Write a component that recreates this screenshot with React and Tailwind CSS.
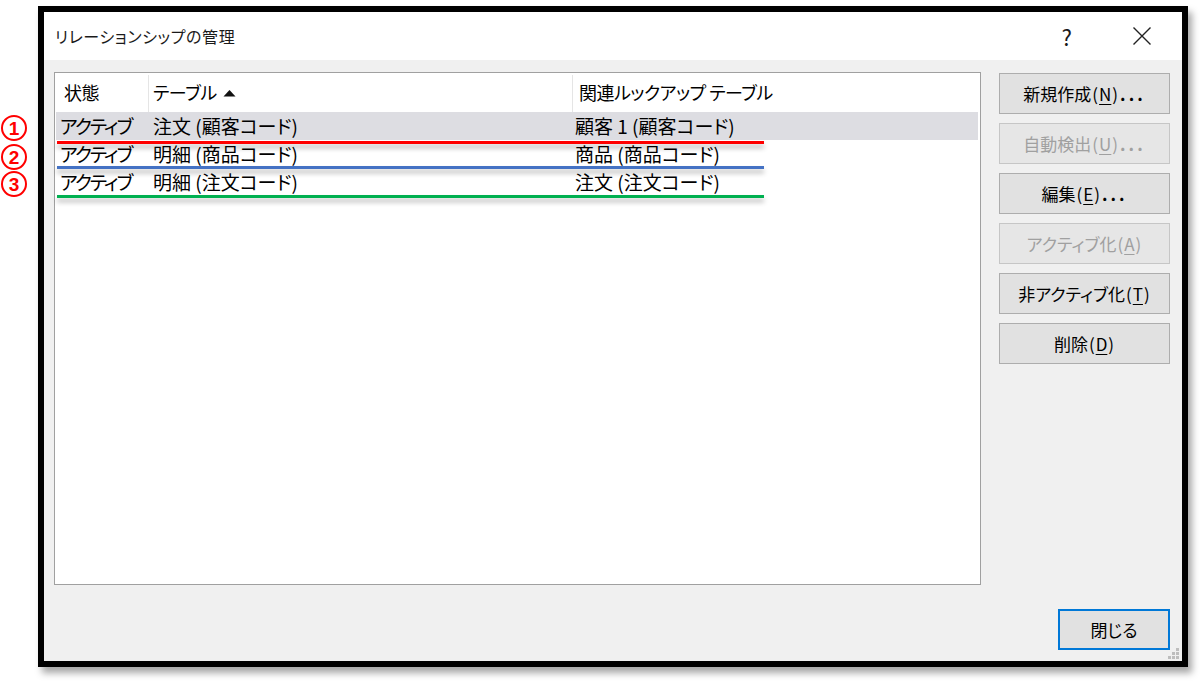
import { useState } from "react";

const relations = [
  { status: "アクティブ", table: "注文 (顧客コード)", lookup: "顧客 1 (顧客コード)" },
  { status: "アクティブ", table: "明細 (商品コード)", lookup: "商品 (商品コード)" },
  { status: "アクティブ", table: "明細 (注文コード)", lookup: "注文 (注文コード)" },
];

const actions = [
  { label: "新規作成", key: "N", dots: true, disabled: false },
  { label: "自動検出", key: "U", dots: true, disabled: true },
  { label: "編集", key: "E", dots: true, disabled: false },
  { label: "アクティブ化", key: "A", dots: false, disabled: true },
  { label: "非アクティブ化", key: "T", dots: false, disabled: false },
  { label: "削除", key: "D", dots: false, disabled: false },
];

// annotation marks drawn over the screenshot
const marks = [
  { num: "1", top: 115, line: 141, color: "bg-[#ff0000]" },
  { num: "2", top: 144, line: 166, color: "bg-[#4472c4]" },
  { num: "3", top: 171, line: 195, color: "bg-[#00b050]" },
];

export default function App() {
  const [selected, setSelected] = useState(0);

  return (
    <div className="relative w-[1200px] h-[681px] bg-white pt-[6px] pl-[38px] font-['Noto_Sans_CJK_JP','Noto_Sans',sans-serif] [font-feature-settings:'palt'] text-black">
      <div className="w-[1150px] h-[661px] border-[6px] border-black flex flex-col shadow-[4px_6px_7px_rgba(0,0,0,0.35)]">
        {/* title bar */}
        <div className="h-[48px] bg-white flex items-center pl-[11px] shrink-0">
          <span className="text-[16px] tracking-[0.6px] text-[#1a1a1a]">リレーションシップの管理</span>
          <span className="ml-auto mr-[60px] text-[22px] leading-none text-[#1a1a1a]">?</span>
          <svg width="20" height="20" viewBox="0 0 20 20" className="mr-[30px]">
            <path d="M1.5 1.5 L18.5 18.5 M18.5 1.5 L1.5 18.5" stroke="#222" strokeWidth="1.4" fill="none" />
          </svg>
        </div>

        {/* body */}
        <div className="relative flex-1 bg-[#f0f0f0] flex flex-col pt-[12px] pl-[10px] pr-[12px] pb-[11px]">
          <div className="flex gap-[18px]">
            {/* list */}
            <div className="w-[927px] h-[513px] border border-[#a0a0a0] bg-white">
              <div className="h-[39px] flex text-[18px] tracking-[-0.5px]">
                <div className="w-[93px] pl-[9px] flex items-center">状態</div>
                <div className="w-px bg-[#e5e5e5] mt-[2px]" />
                <div className="w-[423px] pl-[4px] flex items-center gap-[6px]">
                  テーブル
                  <svg width="13" height="8" viewBox="0 0 13 8">
                    <path d="M0.5 7.5 L6.5 1 L12.5 7.5 Z" fill="#111" />
                  </svg>
                </div>
                <div className="w-px bg-[#e5e5e5] mt-[2px]" />
                <div className="flex-1 pl-[6px] flex items-center">関連ルックアップ テーブル</div>
              </div>
              {relations.map((r, i) => (
                <div
                  key={i}
                  onClick={() => setSelected(i)}
                  className={`mx-[1px] w-[922px] h-[28px] flex items-center text-[19px] leading-[28px] ${selected === i ? "bg-[#dddde2]" : ""}`}
                >
                  <div className="w-[92px] pl-[4px] tracking-[-2px]">{r.status}</div>
                  <div className="w-[424px] pl-[5px]">{r.table}</div>
                  <div className="flex-1 pl-[3px]">{r.lookup}</div>
                </div>
              ))}
            </div>

            {/* action buttons */}
            <div className="w-[171px] flex flex-col gap-[9px] mt-[1px]">
              {actions.map((a) => (
                <button
                  key={a.key}
                  disabled={a.disabled}
                  className={`h-[41px] border text-[17px] ${a.disabled ? "bg-[#e6e6e6] border-[#c6c6c6] text-[#a0a0a0]" : "bg-[#e1e1e1] border-[#adadad] text-black"}`}
                >
                  {a.label}
                  <span className="px-[1px]">(</span>
                  <span className="underline underline-offset-[3px]">{a.key}</span>
                  <span className="px-[1px]">)</span>
                  {a.dots && <span className="tracking-[3px] pl-[1px] font-bold">...</span>}
                </button>
              ))}
            </div>
          </div>

          <div className="mt-auto flex justify-end">
            <button className="w-[112px] h-[41px] border-2 border-[#0078d7] bg-[#e1e1e1] text-[17px]">閉じる</button>
          </div>

          {/* resize grip */}
          <svg width="14" height="14" viewBox="0 0 14 14" className="absolute right-[2px] bottom-[1px]">
            <rect x="10" y="2" width="3" height="3" fill="#bdbdbd" />
            <rect x="6" y="6" width="3" height="3" fill="#bdbdbd" />
            <rect x="10" y="6" width="3" height="3" fill="#bdbdbd" />
            <rect x="2" y="10" width="3" height="3" fill="#bdbdbd" />
            <rect x="6" y="10" width="3" height="3" fill="#bdbdbd" />
            <rect x="10" y="10" width="3" height="3" fill="#bdbdbd" />
          </svg>
        </div>
      </div>

      {marks.map((m) => (
        <div key={m.num}>
          <span
            className="absolute left-[1px] w-[26px] h-[26px] rounded-full border-[2.5px] border-[#ff0000] flex items-center justify-center font-['Liberation_Sans',sans-serif] font-bold text-[19px] leading-none text-[#ff0000]"
            style={{ top: m.top }}
          >
            {m.num}
          </span>
          <div
            className={`absolute left-[57px] w-[707px] h-[3px] ${m.color} shadow-[0_4px_5px_rgba(0,0,0,0.3)]`}
            style={{ top: m.line }}
          />
        </div>
      ))}
    </div>
  );
}
